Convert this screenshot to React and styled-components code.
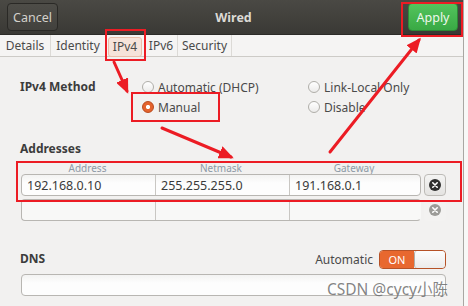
import React from 'react'
import styled, { createGlobalStyle } from 'styled-components'

const GlobalStyle = createGlobalStyle`
  html, body { margin:0; padding:0; background:#f8f8f7; }
  body { font-family:"Noto Sans", "Open Sans", sans-serif; }
  * { box-sizing:border-box; }
`

const TABS = [
  { label: 'Details', width: 51 },
  { label: 'Identity', width: 55 },
  { label: 'IPv4', width: 39, active: true },
  { label: 'IPv6', width: 33 },
  { label: 'Security', width: 54 },
]

const COLUMNS = ['Address', 'Netmask', 'Gateway']

function Radio({ checked, children }) {
  return (
    <RadioItem>
      <RadioDot checked={checked} />
      {children}
    </RadioItem>
  )
}

function ClearIcon({ disabled }) {
  return (
    <svg width="12" height="12" viewBox="0 0 12 12">
      <circle cx="6" cy="6" r="6" fill={disabled ? '#9c9b98' : '#2f2f2f'} />
      <path d="M3.8 3.8 L8.2 8.2 M8.2 3.8 L3.8 8.2" stroke="#fff" strokeWidth="1.6" strokeLinecap="round" />
    </svg>
  )
}

function Annotations() {
  return (
    <Overlay viewBox="0 0 468 306">
      <defs>
        <marker id="head" markerUnits="userSpaceOnUse" markerWidth="15" markerHeight="13" refX="12" refY="6.5" orient="auto">
          <path d="M0,0 L15,6.5 L0,13 z" fill="#ec1c24" />
        </marker>
      </defs>
      <g fill="none" stroke="#ec1c24" strokeWidth="2">
        <rect x="106" y="30" width="39" height="30" />
        <rect x="402" y="3" width="60" height="33" />
        <rect x="132" y="93" width="87" height="28" />
        <rect x="17" y="162" width="444" height="39" />
      </g>
      <g stroke="#ec1c24" strokeWidth="3" strokeLinecap="round">
        <line x1="114" y1="62" x2="127" y2="91" markerEnd="url(#head)" />
        <line x1="162" y1="128" x2="231" y2="157" markerEnd="url(#head)" />
        <line x1="330" y1="152" x2="419" y2="40" markerEnd="url(#head)" />
      </g>
    </Overlay>
  )
}

export default function App() {
  return (
    <Window>
      <GlobalStyle />
      <HeaderBar>
        <HeaderButton>Cancel</HeaderButton>
        <Title>Wired</Title>
        <HeaderButton primary>Apply</HeaderButton>
      </HeaderBar>
      <TabBar>
        {TABS.map(t => (
          <Tab key={t.label} width={t.width} active={t.active}>
            <span>{t.label}</span>
          </Tab>
        ))}
      </TabBar>
      <Content>
        <MethodGrid>
          <SectionLabel>IPv4 Method</SectionLabel>
          <Radio>Automatic (DHCP)</Radio>
          <Radio>Link-Local Only</Radio>
          <span />
          <Radio checked>Manual</Radio>
          <Radio>Disable</Radio>
        </MethodGrid>

        <SectionLabel style={{ marginTop: 24 }}>Addresses</SectionLabel>
        <ColumnHeads>
          {COLUMNS.map(c => <ColumnHead key={c}>{c}</ColumnHead>)}
        </ColumnHeads>
        <AddressRow>
          <Entries>
            <Cell>192.168.0.10</Cell>
            <Cell>255.255.255.0</Cell>
            <Cell>191.168.0.1</Cell>
          </Entries>
          <ClearButton><ClearIcon /></ClearButton>
        </AddressRow>
        <AddressRow empty>
          <Entries empty>
            <Cell />
            <Cell />
            <Cell />
          </Entries>
          <ClearButton disabled><ClearIcon disabled /></ClearButton>
        </AddressRow>

        <DnsRow>
          <SectionLabel>DNS</SectionLabel>
          <AutoSwitch>
            Automatic
            <Toggle>
              <ToggleOn>ON</ToggleOn>
              <ToggleKnob />
            </Toggle>
          </AutoSwitch>
        </DnsRow>
        <DnsEntry />
      </Content>
      <Watermark>CSDN @cycy小陈</Watermark>
      <Annotations />
    </Window>
  )
}

const Window = styled.div`
  position:relative;
  width:464px;
  height:306px;
  overflow:hidden;
  background:#f2f1f0;
  border-right:1px solid #a9a7a3;
  color:#3c3c3c;
`

const HeaderBar = styled.div`
  display:grid;
  grid-template-columns:1fr auto 1fr;
  align-items:center;
  height:35px;
  padding:0 3px 0 7px;
  background:linear-gradient(#4a4944, #3a3935);
  border-bottom:1px solid #2c2b28;
`

const HeaderButton = styled.div`
  justify-self:${p => (p.primary ? 'end' : 'start')};
  width:${p => (p.primary ? '50px' : '51px')};
  height:28px;
  display:flex;
  align-items:center;
  justify-content:center;
  border-radius:4px;
  font-size:12.5px;
  border:1px solid ${p => (p.primary ? '#2c8a36' : '#2a2926')};
  color:${p => (p.primary ? '#eef7ec' : '#d3d1cc')};
  background:${p => (p.primary
    ? 'linear-gradient(#53c45d, #39a944)'
    : 'linear-gradient(#4e4d48, #42413d)')};
  margin-right:${p => (p.primary ? '2px' : '0')};
`

const Title = styled.div`
  font-size:12.5px;
  font-weight:700;
  color:#dcdad5;
`

const TabBar = styled.div`
  display:flex;
  height:22px;
  background:#f5f4f3;
  border-bottom:1px solid #cdcbc7;
`

const Tab = styled.div`
  width:${p => p.width}px;
  display:flex;
  align-items:center;
  justify-content:center;
  border-right:1px solid ${p => (p.active ? 'transparent' : '#dcdad6')};
  font-size:12px;
  color:#4a4a4a;

  span{
    padding:0 4px;
    line-height:18px;
    border-radius:3px;
    background:${p => (p.active ? '#f6e3da' : 'transparent')};
    border:1px solid ${p => (p.active ? '#eabfab' : 'transparent')};
    margin-top:${p => (p.active ? '2px' : '0')};
  }
`

const Content = styled.div`
  display:flex;
  flex-direction:column;
  padding:20px 17px 0 20px;
`

const MethodGrid = styled.div`
  display:grid;
  grid-template-columns:122px 166px 1fr;
  grid-auto-rows:20px;
  align-items:center;
`

const SectionLabel = styled.div`
  font-size:12px;
  font-weight:700;
  color:#3c3c3c;
  line-height:16px;
`

const RadioItem = styled.div`
  display:flex;
  align-items:center;
  gap:4px;
  font-size:12px;
  color:#4a4a4a;
`

const RadioDot = styled.span`
  width:12px;
  height:12px;
  border-radius:50%;
  border:1px solid ${p => (p.checked ? '#b9491c' : '#b0aea9')};
  background:${p => (p.checked
    ? 'radial-gradient(circle, #fff 0 1.8px, #e4632d 2.4px)'
    : 'linear-gradient(#ffffff, #ecebea)')};
`

const ColumnHeads = styled.div`
  display:grid;
  grid-template-columns:133px 134px 132px;
  margin:4px 0 0 1px;
  height:12px;
  align-items:center;
`

const ColumnHead = styled.div`
  text-align:center;
  font-size:10px;
  color:#8d9aa6;
`

const AddressRow = styled.div`
  display:flex;
  gap:3px;
  margin:${p => (p.empty ? '3px' : '1px')} 0 0 1px;
`

const Entries = styled.div`
  width:400px;
  height:22px;
  display:grid;
  grid-template-columns:133px 134px 1fr;
  border:1px solid #b8b6b2;
  border-right-color:${p => (p.empty ? 'transparent' : '#b8b6b2')};
  border-radius:4px;
  background:${p => (p.empty ? '#f8f8f7' : 'linear-gradient(#f3f3f2, #fdfdfd 40%)')};
  overflow:hidden;
`

const Cell = styled.div`
  display:flex;
  align-items:center;
  padding-left:5px;
  font-size:12.5px;
  color:#3a3a3a;
  & + &{ border-left:1px solid #c9c7c3; }
`

const ClearButton = styled.div`
  width:22px;
  height:22px;
  display:flex;
  align-items:center;
  justify-content:center;
  border:1px solid ${p => (p.disabled ? 'transparent' : '#bdbbb7')};
  border-radius:4px;
  background:${p => (p.disabled ? '#f3f2f1' : 'linear-gradient(#f4f4f3, #e4e3e1)')};
`

const DnsRow = styled.div`
  display:flex;
  align-items:center;
  justify-content:space-between;
  margin-top:28px;
  height:20px;
`

const AutoSwitch = styled.div`
  display:flex;
  align-items:center;
  gap:6px;
  font-size:12px;
  color:#4a4a4a;
`

const Toggle = styled.div`
  display:flex;
  width:67px;
  height:19px;
  border:1px solid #b65227;
  border-radius:4px;
  overflow:hidden;
`

const ToggleOn = styled.div`
  width:34px;
  display:flex;
  align-items:center;
  justify-content:center;
  background:#e8682f;
  color:#fff;
  font-size:11px;
`

const ToggleKnob = styled.div`
  flex:1;
  background:linear-gradient(#fdfdfd, #ecebea);
  border-left:1px solid #b0aea9;
  border-radius:3px;
`

const DnsEntry = styled.div`
  margin:5px 0 0 1px;
  height:22px;
  border:1px solid #b8b6b2;
  border-radius:4px;
  background:linear-gradient(#f3f3f2, #fdfdfd 40%);
`

const Watermark = styled.div`
  position:absolute;
  right:15px;
  top:279px;
  font-family:"Noto Sans", "Noto Sans CJK SC", sans-serif;
  font-size:15.5px;
  color:rgba(110, 110, 110, 0.85);
  line-height:20px;
`

const Overlay = styled.svg`
  position:absolute;
  top:0;
  left:0;
  width:468px;
  height:306px;
  pointer-events:none;
`
